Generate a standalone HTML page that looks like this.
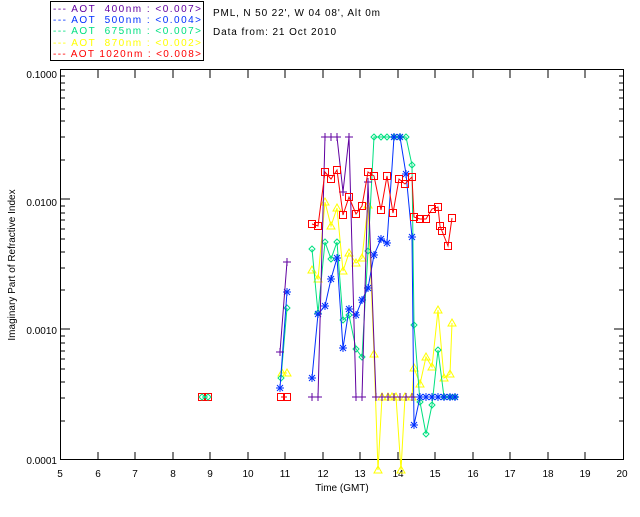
<!DOCTYPE html>
<html><head><style>
body{margin:0;background:#fff;width:640px;height:512px;overflow:hidden;font-family:"Liberation Sans",sans-serif;}
</style></head><body>
<svg width="640" height="512" xmlns="http://www.w3.org/2000/svg" font-family="Liberation Sans, sans-serif" font-size="10">
<defs>
<marker id="mp" viewBox="-5 -5 10 10" markerWidth="10" markerHeight="10" markerUnits="userSpaceOnUse"><path d="M-4 0H4M0-4V4" stroke="#6000a0" stroke-width="1"/></marker>
<marker id="mb" viewBox="-5 -5 10 10" markerWidth="10" markerHeight="10" markerUnits="userSpaceOnUse"><path d="M-4 0H4M0-4V4M-3-3L3 3M-3 3L3-3" stroke="#0030ff" stroke-width="1"/></marker>
<marker id="mg" viewBox="-5 -5 10 10" markerWidth="10" markerHeight="10" markerUnits="userSpaceOnUse"><path d="M0-3L3 0L0 3L-3 0Z" stroke="#00e080" fill="none" stroke-width="1"/></marker>
<marker id="my" viewBox="-5 -5 10 10" markerWidth="10" markerHeight="10" markerUnits="userSpaceOnUse"><path d="M0-4L4 3H-4Z" stroke="#ffff00" fill="none" stroke-width="1"/></marker>
<marker id="mr" viewBox="-5 -5 10 10" markerWidth="10" markerHeight="10" markerUnits="userSpaceOnUse"><rect x="-3.5" y="-3.5" width="7" height="7" stroke="#ff0000" fill="none" stroke-width="1"/></marker>
</defs>
<rect x="50.5" y="1.5" width="153" height="59" fill="none" stroke="#000"/>
<g font-size="10">
<text x="53" y="12" fill="#6000a0" xml:space="preserve" textLength="148">--- AOT  400nm : &lt;0.007&gt;</text>
<text x="53" y="23" fill="#0030ff" xml:space="preserve" textLength="148">--- AOT  500nm : &lt;0.004&gt;</text>
<text x="53" y="34" fill="#00e080" xml:space="preserve" textLength="148">--- AOT  675nm : &lt;0.007&gt;</text>
<text x="53" y="46" fill="#ffff00" xml:space="preserve" textLength="148">--- AOT  870nm : &lt;0.002&gt;</text>
<text x="53" y="57" fill="#ff0000" xml:space="preserve" textLength="148">--- AOT 1020nm : &lt;0.008&gt;</text>
<text x="213" y="16" fill="#000" textLength="167">PML, N 50 22', W 04 08', Alt 0m</text>
<text x="213" y="35" fill="#000" textLength="123">Data from: 21 Oct 2010</text>
</g>
<rect x="60.5" y="69.5" width="563" height="390" fill="none" stroke="#000"/>
<g stroke="#000">
<path d="M98 70v8M135 70v8M173 70v8M210 70v8M248 70v8M285 70v8M323 70v8M360 70v8M398 70v8M435 70v8M473 70v8M510 70v8M548 70v8M585 70v8"/>
<path d="M98 460v-8M135 460v-8M173 460v-8M210 460v-8M248 460v-8M285 460v-8M323 460v-8M360 460v-8M398 460v-8M435 460v-8M473 460v-8M510 460v-8M548 460v-8M585 460v-8"/>
<path d="M60 199h10M60 329h10M614 199h10M614 329h10"/>
<path d="M60 421h5M60 398h5M60 382h5M60 369h5M60 359h5M60 351h5M60 343h5M60 336h5M60 290h5M60 268h5M60 252h5M60 239h5M60 229h5M60 220h5M60 213h5M60 206h5M60 160h5M60 137h5M60 121h5M60 109h5M60 98h5M60 90h5M60 83h5M60 76h5"/>
<path d="M624 421h-5M624 398h-5M624 382h-5M624 369h-5M624 359h-5M624 351h-5M624 343h-5M624 336h-5M624 290h-5M624 268h-5M624 252h-5M624 239h-5M624 229h-5M624 220h-5M624 213h-5M624 206h-5M624 160h-5M624 137h-5M624 121h-5M624 109h-5M624 98h-5M624 90h-5M624 83h-5M624 76h-5"/>
</g>
<g font-size="10" fill="#000" text-anchor="end">
<text x="57" y="78">0.1000</text><text x="57" y="206">0.0100</text><text x="57" y="334">0.0010</text><text x="57" y="464">0.0001</text>
</g>
<g font-size="10" fill="#000" text-anchor="middle">
<text x="60" y="477">5</text><text x="98" y="477">6</text><text x="135" y="477">7</text><text x="173" y="477">8</text><text x="210" y="477">9</text><text x="248" y="477">10</text><text x="285" y="477">11</text><text x="323" y="477">12</text><text x="360" y="477">13</text><text x="398" y="477">14</text><text x="435" y="477">15</text><text x="473" y="477">16</text><text x="510" y="477">17</text><text x="548" y="477">18</text><text x="585" y="477">19</text><text x="622" y="477">20</text>
<text x="342" y="491">Time (GMT)</text>
<text transform="translate(15,265) rotate(-90)">Imaginary Part of Refractive Index</text>
</g>
<g fill="none" stroke-width="1">
<polyline stroke="#ffff00" marker-start="url(#my)" marker-mid="url(#my)" marker-end="url(#my)" points="282,373 287,373"/>
<polyline stroke="#ffff00" marker-mid="url(#my)" marker-start="url(#my)" points="312,270 318,279 325,202 331,226 337,208 343,271 349,253 356,263 362,258 368,205 374,354 378,470 382,397 388,397 392,397 396,397 401,470 405,397 412,397 414,368 420,384 426,357 432,367 438,310 444,378 450,374 452,323" marker-end="url(#my)"/>
<polyline stroke="#00e080" marker-start="url(#mg)" marker-mid="url(#mg)" marker-end="url(#mg)" points="281,378 287,308"/>
<polyline stroke="#00e080" marker-start="url(#mg)" marker-mid="url(#mg)" marker-end="url(#mg)" points="312,249 318,313 325,242 331,259 337,242 343,320 349,315 356,349 362,357 368,251 374,137 381,137 387,137 394,137 400,137 406,137 412,165 414,325 420,402 426,434 432,405 438,350 444,397 450,397 455,397"/>
<polyline stroke="#0030ff" marker-start="url(#mb)" marker-mid="url(#mb)" marker-end="url(#mb)" points="280,388 287,292"/>
<polyline stroke="#0030ff" marker-start="url(#mb)" marker-mid="url(#mb)" marker-end="url(#mb)" points="312,378 318,314 325,306 331,279 337,258 343,348 349,309 356,315 362,300 368,288 374,255 381,239 387,243 394,137 400,137 406,174 412,237 414,425 420,397 426,397 432,397 438,397 444,397 450,397 455,397"/>
<polyline stroke="#6000a0" marker-start="url(#mp)" marker-mid="url(#mp)" marker-end="url(#mp)" points="280,352 287,262"/>
<polyline stroke="#6000a0" marker-start="url(#mp)" marker-mid="url(#mp)" marker-end="url(#mp)" points="312,397 318,397 325,137 331,137 337,137 343,192 349,137 356,397 362,397 368,182 376,397 382,397 388,397 394,397 400,397 406,397 412,397"/>
<polyline stroke="#ff0000" marker-start="url(#mr)" marker-end="url(#mr)" points="202,397 208,397"/>
<polyline stroke="#ff0000" marker-start="url(#mr)" marker-end="url(#mr)" points="281,397 287,397"/>
<polyline stroke="#ff0000" marker-start="url(#mr)" marker-mid="url(#mr)" marker-end="url(#mr)" points="312,224 318,226 325,172 331,179 337,170 343,215 349,197 356,214 362,206 368,172 374,176 381,210 387,176 393,213 399,179 405,184 412,177 414,217 420,219 426,219 432,209 438,207 440,226 442,231 448,246 452,218"/>
<polyline stroke="#00e080" marker-start="url(#mg)" marker-end="url(#mg)" points="202,397 208,397"/>
</g>
</svg>
</body></html>
